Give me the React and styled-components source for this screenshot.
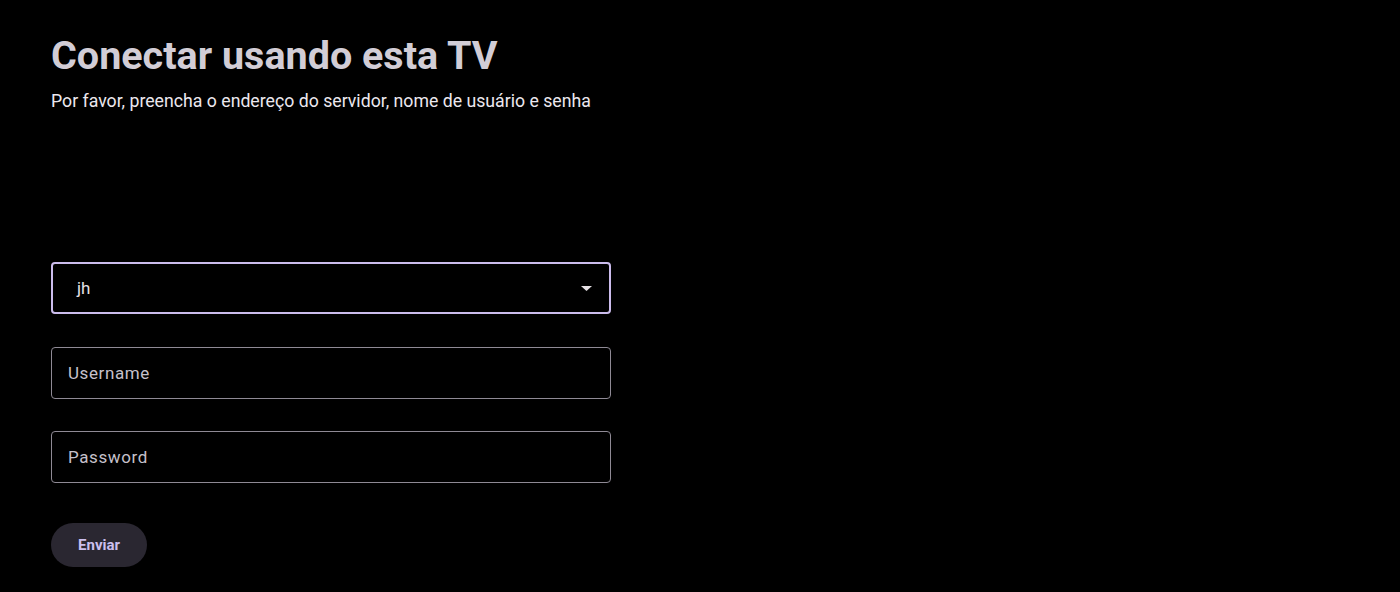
import styled, { createGlobalStyle } from "styled-components";

const Global = createGlobalStyle`
    html, body {
        margin: 0;
        padding: 0;
        background: #000000;
    }
    body {
        font-family: Roboto, "Noto Sans", sans-serif;
    }
`

export default function App() {
    return (
        <>
            <Global />
            <Page>
                <Title>Conectar usando esta TV</Title>
                <Subtitle>Por favor, preencha o endereço do servidor, nome de usuário e senha</Subtitle>

                <Form>
                    <Field focused>
                        <Value>jh</Value>
                        <svg width="11" height="5" viewBox="0 0 11 5"><path d="M0 0 L11 0 L5.5 5 Z" fill="#e6e1e5" /></svg>
                    </Field>
                    <Field>
                        <Placeholder>Username</Placeholder>
                    </Field>
                    <Field>
                        <Placeholder>Password</Placeholder>
                    </Field>
                    <Button>Enviar</Button>
                </Form>
            </Page>
        </>
    )
}

const Page = styled.div`
    height: 592px;
    box-sizing: border-box;
    padding: 33px 51px 0;
    background: #000000;
`

const Title = styled.h1`
    margin: 0;
    font-size: 39.5px;
    line-height: 46px;
    font-weight: 700;
    color: #d2cdd6;
`

const Subtitle = styled.p`
    margin: 11px 0 0;
    font-size: 17.7px;
    line-height: 22px;
    font-weight: 400;
    color: #ece8ef;
`

const Form = styled.div`
    margin-top: 150px;
    width: 560px;
    display: flex;
    flex-direction: column;
    gap: 32.5px;
`

const Field = styled.div`
    box-sizing: border-box;
    height: 52px;
    border: ${(props) => props.focused ? "2px solid #cbbcec" : "1px solid #8f8a95"};
    border-radius: 4px;
    display: flex;
    align-items: center;
    justify-content: space-between;
    padding: ${(props) => props.focused ? "0 17px 0 24px" : "0 16px 0 16px"};
`

const Value = styled.span`
    font-size: 17px;
    color: #e6e1e5;
`

const Placeholder = styled.span`
    font-size: 17px;
    letter-spacing: 0.6px;
    color: #c6c1cb;
`

const Button = styled.button`
    margin-top: 7px;
    width: 96px;
    height: 44px;
    border: none;
    border-radius: 22px;
    background: #2a2731;
    color: #cbbfee;
    font-family: Roboto, "Noto Sans", sans-serif;
    font-size: 15px;
    font-weight: 700;
`
